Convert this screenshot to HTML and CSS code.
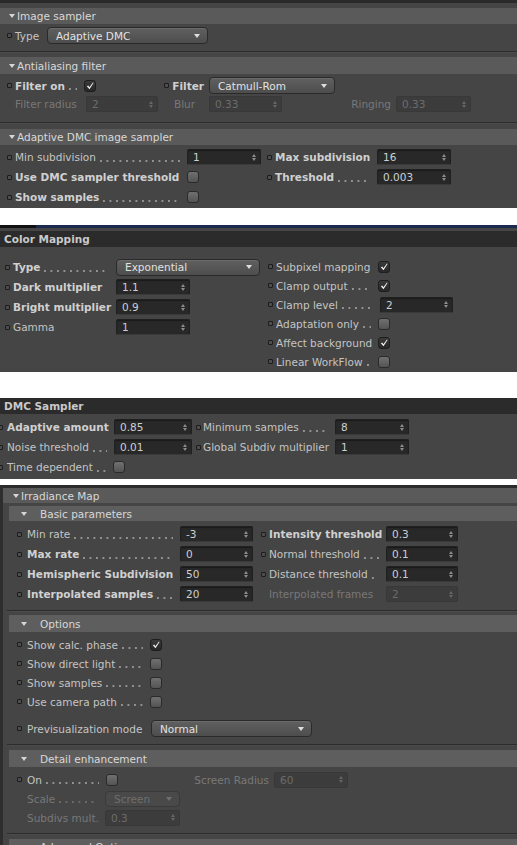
FILE: index.html
```html
<!DOCTYPE html>
<html>
<head>
<meta charset="utf-8">
<link rel="stylesheet" href="styles.css">
</head>
<body>

<section class="panel p1">
  <div class="hdr"><span class="tri"></span>Image sampler</div>
  <div class="row p1-type">
    <div class="cell w40"><span class="b"></span><span class="lbl">Type</span></div>
    <div class="dd w161"><span>Adaptive DMC</span></div>
  </div>
  <div class="sep p1-sep1"></div>
  <div class="hdr p1-h2"><span class="tri"></span>Antialiasing filter</div>
  <div class="row p1-filter">
    <div class="cell w77"><span class="b"></span><span class="lbl bold">Filter on</span><span class="dots"></span></div>
    <div class="ctl w12"><span class="chk on"><svg viewBox="0 0 12 12" width="10" height="10"><path d="M2.2 6.4 L3.9 5.4 L5.2 7.4 L9.6 1.8 L10.2 2.4 L5.4 10 Z" fill="#f2f2f2"/></svg></span></div>
    <div class="cell w113 end"><span class="b"></span><span class="lbl bold">Filter</span></div>
    <div class="dd w126"><span>Catmull-Rom</span></div>
  </div>
  <div class="row p1-radius">
    <div class="cell w79"><span class="b hid"></span><span class="lbl dis">Filter radius</span></div>
    <div class="fld off w72"><span class="v">2</span><span class="spin"><i></i><i></i></span></div>
    <div class="cell w51 pl16"><span class="lbl dis">Blur</span></div>
    <div class="fld off w73"><span class="v">0.33</span><span class="spin"><i></i><i></i></span></div>
    <div class="cell w114 end"><span class="lbl dis">Ringing</span></div>
    <div class="fld off w75"><span class="v">0.33</span><span class="spin"><i></i><i></i></span></div>
  </div>
  <div class="sep p1-sep2"></div>
  <div class="hdr p1-h3"><span class="tri"></span>Adaptive DMC image sampler</div>
  <div class="row p1-dmc">
    <div class="cell w180"><span class="b"></span><span class="lbl">Min subdivision</span><span class="dots"></span></div>
    <div class="fld w74"><span class="v">1</span><span class="spin"><i></i><i></i></span></div>
    <div class="cell w116 pl6"><span class="b"></span><span class="lbl bold">Max subdivision</span></div>
    <div class="fld w74"><span class="v">16</span><span class="spin"><i></i><i></i></span></div>
  </div>
  <div class="row">
    <div class="cell w180"><span class="b"></span><span class="lbl bold">Use DMC sampler threshold</span><span class="dots"></span></div>
    <div class="ctl w74"><span class="chk"></span></div>
    <div class="cell w116 pl6"><span class="b"></span><span class="lbl bold">Threshold</span><span class="dots"></span></div>
    <div class="fld w74"><span class="v">0.003</span><span class="spin"><i></i><i></i></span></div>
  </div>
  <div class="row">
    <div class="cell w180"><span class="b"></span><span class="lbl bold">Show samples</span><span class="dots"></span></div>
    <div class="ctl w74"><span class="chk"></span></div>
  </div>
</section>

<section class="panel p2">
  <div class="bluebar"><span class="stub"></span></div>
  <div class="hdr dark p2-hdr">Color Mapping</div>
  <div class="cols">
    <div class="col p2-left">
      <div class="row">
        <div class="cell w111"><span class="b"></span><span class="lbl bold">Type</span><span class="dots"></span></div>
        <div class="dd w144"><span>Exponential</span></div>
      </div>
      <div class="row">
        <div class="cell w111"><span class="b"></span><span class="lbl bold">Dark multiplier</span></div>
        <div class="fld w74"><span class="v">1.1</span><span class="spin"><i></i><i></i></span></div>
      </div>
      <div class="row">
        <div class="cell w111"><span class="b"></span><span class="lbl bold">Bright multiplier</span></div>
        <div class="fld w74"><span class="v">0.9</span><span class="spin"><i></i><i></i></span></div>
      </div>
      <div class="row">
        <div class="cell w111"><span class="b"></span><span class="lbl">Gamma</span></div>
        <div class="fld w74"><span class="v">1</span><span class="spin"><i></i><i></i></span></div>
      </div>
    </div>
    <div class="col p2-right">
      <div class="row h19">
        <div class="cell w110"><span class="b"></span><span class="lbl">Subpixel mapping</span></div>
        <span class="chk on"><svg viewBox="0 0 12 12" width="10" height="10"><path d="M2.2 6.4 L3.9 5.4 L5.2 7.4 L9.6 1.8 L10.2 2.4 L5.4 10 Z" fill="#f2f2f2"/></svg></span>
      </div>
      <div class="row h19">
        <div class="cell w110"><span class="b"></span><span class="lbl">Clamp output</span><span class="dots"></span></div>
        <span class="chk on"><svg viewBox="0 0 12 12" width="10" height="10"><path d="M2.2 6.4 L3.9 5.4 L5.2 7.4 L9.6 1.8 L10.2 2.4 L5.4 10 Z" fill="#f2f2f2"/></svg></span>
      </div>
      <div class="row h19">
        <div class="cell w110"><span class="b"></span><span class="lbl">Clamp level</span><span class="dots"></span></div>
        <div class="fld w73 ml2"><span class="v">2</span><span class="spin"><i></i><i></i></span></div>
      </div>
      <div class="row h19">
        <div class="cell w110"><span class="b"></span><span class="lbl">Adaptation only</span><span class="dots"></span></div>
        <span class="chk"></span>
      </div>
      <div class="row h19">
        <div class="cell w110"><span class="b"></span><span class="lbl">Affect background</span></div>
        <span class="chk on"><svg viewBox="0 0 12 12" width="10" height="10"><path d="M2.2 6.4 L3.9 5.4 L5.2 7.4 L9.6 1.8 L10.2 2.4 L5.4 10 Z" fill="#f2f2f2"/></svg></span>
      </div>
      <div class="row h19">
        <div class="cell w110"><span class="b"></span><span class="lbl">Linear WorkFlow</span><span class="dots"></span></div>
        <span class="chk"></span>
      </div>
    </div>
  </div>
</section>

<section class="panel p3">
  <div class="hdr dark p3-hdr">DMC Sampler</div>
  <div class="row p3-r1">
    <div class="cell w114"><span class="b"></span><span class="lbl bold">Adaptive amount</span></div>
    <div class="fld w78"><span class="v">0.85</span><span class="spin"><i></i><i></i></span></div>
    <div class="cell w143 pl4"><span class="b"></span><span class="lbl">Minimum samples</span><span class="dots"></span></div>
    <div class="fld w74"><span class="v">8</span><span class="spin"><i></i><i></i></span></div>
  </div>
  <div class="row">
    <div class="cell w114"><span class="b"></span><span class="lbl">Noise threshold</span><span class="dots"></span></div>
    <div class="fld w78"><span class="v">0.01</span><span class="spin"><i></i><i></i></span></div>
    <div class="cell w143 pl4"><span class="b"></span><span class="lbl">Global Subdiv multiplier</span></div>
    <div class="fld w74"><span class="v">1</span><span class="spin"><i></i><i></i></span></div>
  </div>
  <div class="row">
    <div class="cell w113"><span class="b"></span><span class="lbl">Time dependent</span><span class="dots"></span></div>
    <span class="chk"></span>
  </div>
</section>

<section class="panel p4">
  <div class="hdr p4-hdr"><span class="tri"></span>Irradiance Map</div>
  <div class="sub p4-basic"><span class="tri"></span>Basic parameters</div>
  <div class="row p4-first">
    <div class="cell w163"><span class="b"></span><span class="lbl">Min rate</span><span class="dots"></span></div>
    <div class="fld w73"><span class="v">-3</span><span class="spin"><i></i><i></i></span></div>
    <div class="cell w133 pl8"><span class="b"></span><span class="lbl bold">Intensity threshold</span></div>
    <div class="fld w72"><span class="v">0.3</span><span class="spin"><i></i><i></i></span></div>
  </div>
  <div class="row">
    <div class="cell w163"><span class="b"></span><span class="lbl bold">Max rate</span><span class="dots"></span></div>
    <div class="fld w73"><span class="v">0</span><span class="spin"><i></i><i></i></span></div>
    <div class="cell w133 pl8"><span class="b"></span><span class="lbl">Normal threshold</span><span class="dots"></span></div>
    <div class="fld w72"><span class="v">0.1</span><span class="spin"><i></i><i></i></span></div>
  </div>
  <div class="row">
    <div class="cell w163"><span class="b"></span><span class="lbl bold">Hemispheric Subdivision</span></div>
    <div class="fld w73"><span class="v">50</span><span class="spin"><i></i><i></i></span></div>
    <div class="cell w133 pl8"><span class="b"></span><span class="lbl">Distance threshold</span><span class="dots"></span></div>
    <div class="fld w72"><span class="v">0.1</span><span class="spin"><i></i><i></i></span></div>
  </div>
  <div class="row">
    <div class="cell w163"><span class="b"></span><span class="lbl bold">Interpolated samples</span><span class="dots"></span></div>
    <div class="fld w73"><span class="v">20</span><span class="spin"><i></i><i></i></span></div>
    <div class="cell w133 pl8"><span class="b hid"></span><span class="lbl dis">Interpolated frames</span></div>
    <div class="fld off w72"><span class="v">2</span><span class="spin"><i></i><i></i></span></div>
  </div>

  <div class="sep p4-sep"></div>
  <div class="sub p4-opt"><span class="tri"></span>Options</div>
  <div class="row h19 p4-ofirst">
    <div class="cell w133"><span class="b"></span><span class="lbl">Show calc. phase</span><span class="dots"></span></div>
    <span class="chk on"><svg viewBox="0 0 12 12" width="10" height="10"><path d="M2.2 6.4 L3.9 5.4 L5.2 7.4 L9.6 1.8 L10.2 2.4 L5.4 10 Z" fill="#f2f2f2"/></svg></span>
  </div>
  <div class="row h19">
    <div class="cell w133"><span class="b"></span><span class="lbl">Show direct light</span><span class="dots"></span></div>
    <span class="chk"></span>
  </div>
  <div class="row h19">
    <div class="cell w133"><span class="b"></span><span class="lbl">Show samples</span><span class="dots"></span></div>
    <span class="chk"></span>
  </div>
  <div class="row h19">
    <div class="cell w133"><span class="b"></span><span class="lbl">Use camera path</span><span class="dots"></span></div>
    <span class="chk"></span>
  </div>
  <div class="row p4-previs">
    <div class="cell w134"><span class="b"></span><span class="lbl">Previsualization mode</span></div>
    <div class="dd w161"><span>Normal</span></div>
  </div>

  <div class="sep p4-sep2"></div>
  <div class="sub p4-det"><span class="tri"></span>Detail enhancement</div>
  <div class="row h19 p4-dfirst">
    <div class="cell w89"><span class="b"></span><span class="lbl">On</span><span class="dots"></span></div>
    <span class="chk"></span>
    <div class="cell w156 end"><span class="lbl dis">Screen Radius</span></div>
    <div class="fld off w74"><span class="v">60</span><span class="spin"><i></i><i></i></span></div>
  </div>
  <div class="row h19">
    <div class="cell w88"><span class="b hid"></span><span class="lbl dis">Scale</span><span class="dots ddis"></span></div>
    <div class="dd off w75"><span>Screen</span></div>
  </div>
  <div class="row h19">
    <div class="cell w88"><span class="b hid"></span><span class="lbl dis">Subdivs mult.</span></div>
    <div class="fld off w75"><span class="v">0.3</span><span class="spin"><i></i><i></i></span></div>
  </div>

  <div class="sep p4-sep3"></div>
  <div class="sub p4-adv"><span class="tri"></span>Advanced Options</div>
</section>

</body>
</html>
```

FILE: styles.css
```css
* { box-sizing: border-box; margin: 0; padding: 0; }
html, body { width: 517px; height: 845px; overflow: hidden; background: #ffffff; }
body {
  font-family: "DejaVu Sans", Verdana, sans-serif;
  font-size: 10.5px;
  color: #c4c4c4;
}

.panel { background: #454545; }

/* headers */
.hdr {
  display: flex; align-items: center;
  height: 16px; padding-left: 9px;
  background: #5a5a5a; color: #d8d8d8;
  white-space: nowrap;
}
.hdr.dark { background: #2b2b2b; color: #c9c9c9; font-weight: bold; padding-left: 4px; }
.sub {
  display: flex; align-items: center;
  height: 16px; margin-left: 6px; padding-left: 12px;
  background: #5e5e5e; color: #d8d8d8;
  white-space: nowrap;
}
.tri {
  width: 0; height: 0; flex: none;
  border-left: 3px solid transparent; border-right: 3px solid transparent;
  border-top: 4px solid #d6d6d6;
  margin-right: 2px;
}
.sub .tri { margin-right: 13px; }

.sep { height: 2px; background: #2c2c2c; border-bottom: 1px solid #4c4c4c; }

/* rows */
.row { display: flex; align-items: center; height: 20px; }
.row.h19 { height: 19px; }
.cell { display: flex; align-items: center; flex: none; height: 100%; overflow: hidden; }
.cell.end { justify-content: flex-end; padding-right: 5px; }
.ctl { display: flex; align-items: center; flex: none; }
.pl4 { padding-left: 4px; }
.pl6 { padding-left: 6px; }
.pl8 { padding-left: 8px; }
.pl16 { padding-left: 16px; }
.ml2 { margin-left: 2px; }

.b {
  width: 5px; height: 5px; flex: none;
  border: 1px solid #1c1c1c; border-radius: 1px;
  background: #4d4d4d;
  margin-right: 3px;
}
.b.hid { visibility: hidden; }
.lbl { white-space: nowrap; flex: none; }
.bold { font-weight: bold; color: #d0d0d0; }
.dis { color: #787878; }

.dots {
  flex: 1 1 0; min-width: 0;
  height: 2px; margin: 7px 7px 0 4px;
  background-image: radial-gradient(circle at 1px 1px, #939393 0.8px, transparent 1.15px);
  background-size: 6.5px 2px;
  background-repeat: repeat-x;
}
.dots.ddis { background-image: radial-gradient(circle at 1px 1px, #6a6a6a 0.8px, transparent 1.15px); }

/* numeric field */
.fld {
  display: flex; align-items: center; flex: none;
  height: 16px; padding-left: 5px;
  background: #282828;
  border: 1px solid #202020; border-bottom-color: #3a3a3a;
  border-radius: 2px;
  box-shadow: inset 0 1px 1px #1a1a1a;
  color: #ccd0d4;
}
.fld .v { flex: 1; white-space: nowrap; }
.fld.off { background: #3c3c3c; border-color: #383838; box-shadow: none; color: #6c6c6c; }
.spin { display: flex; flex-direction: column; gap: 1px; margin-right: 4px; }
.spin i {
  display: block; width: 0; height: 0;
  border-left: 2.5px solid transparent; border-right: 2.5px solid transparent;
}
.spin i:first-child { border-bottom: 3px solid #8c8c8c; }
.spin i:last-child { border-top: 3px solid #8c8c8c; }
.fld.off .spin i:first-child { border-bottom-color: #666; }
.fld.off .spin i:last-child { border-top-color: #666; }

/* dropdown */
.dd {
  display: flex; align-items: center; justify-content: space-between; flex: none;
  height: 17px; padding: 0 7px 0 8px;
  border: 1px solid #2a2a2a; border-radius: 4px;
  background: linear-gradient(#606060, #4d4d4d);
  box-shadow: inset 0 1px 0 #6b6b6b;
  color: #e2e2e2; white-space: nowrap;
}
.dd::after {
  content: ""; width: 0; height: 0;
  border-left: 3.5px solid transparent; border-right: 3.5px solid transparent;
  border-top: 4px solid #dedede;
}
.dd.off { background: #494949; border-color: #3a3a3a; box-shadow: none; color: #6e6e6e; height: 16px; }
.dd.off::after { border-top-color: #6e6e6e; }

/* checkbox */
.chk {
  display: flex; align-items: center; justify-content: center; flex: none;
  width: 12px; height: 12px;
  border: 1px solid #2a2a2a; border-radius: 3px;
  background: linear-gradient(#707070, #545454);
}
.chk.on { background: linear-gradient(#3a3a3a, #282828); border-color: #1e1e1e; }

/* widths */
.w12 { width: 12px; } .w40 { width: 40px; } .w51 { width: 51px; }
.w72 { width: 72px; } .w73 { width: 73px; } .w74 { width: 74px; }
.w75 { width: 75px; } .w77 { width: 77px; } .w78 { width: 78px; }
.w79 { width: 79px; } .w88 { width: 88px; } .w89 { width: 89px; }
.w110 { width: 110px; } .w111 { width: 111px; } .w113 { width: 113px; }
.w114 { width: 114px; } .w116 { width: 116px; } .w126 { width: 126px; }
.w133 { width: 133px; } .w134 { width: 134px; } .w143 { width: 143px; }
.w144 { width: 144px; } .w156 { width: 156px; } .w161 { width: 161px; }
.w163 { width: 163px; } .w180 { width: 180px; }

/* panel 1 */
.p1 { height: 208px; border-top: 3px solid #2a2a2a; padding-top: 5px; }
.p1 .row { padding-left: 7px; }
.p1-type { height: 17px !important; margin-top: 3px; }
.p1-sep1 { margin-top: 7px; }
.p1-h2 { margin-top: 4px; height: 17px; }
.p1-filter { height: 17px !important; margin-top: 3px; }
.p1-radius { height: 16px !important; margin-top: 2px; }
.p1-sep2 { margin-top: 10px; }
.p1-h3 { margin-top: 5px; }
.p1-dmc { margin-top: 2px; }

/* panel 2 */
.p2 { height: 147px; margin-top: 17px; }
.bluebar { display: flex; height: 3px; background: #1b2a4e; }
.stub { width: 36px; height: 3px; background: #111; }
.p2-hdr { margin-top: 3px; }
.cols { display: flex; margin-top: 10px; }
.col { display: flex; flex-direction: column; flex: none; }
.p2-left { width: 261px; padding-left: 5px; }
.p2-right { padding-left: 7px; }

/* panel 3 */
.p3 { height: 81px; margin-top: 26px; }
.p3-hdr { padding-left: 0; }
.p3 .row .cell:first-child .b { margin-left: -2px; margin-right: 4px; }
.p3 .row .cell.pl4 .b { margin-right: 2px; }
.p3-r1 { margin-top: 3px; }

/* panel 4 */
.p4 { margin-top: 6px; height: 400px; border-top: 3px solid #2b2b2b; border-left: 3px solid #2e2e2e; }
.p4 .row { padding-left: 14px; }
.p4 .row .cell:first-child .b { margin-right: 5px; }
.p4-hdr { height: 15px; padding-left: 10px; }
.p4-basic { margin-top: 3px; height: 15px; }
.p4-first { margin-top: 3px; }
.p4-sep { margin-top: 6px; margin-left: 4px; }
.p4-opt { margin-top: 3px; height: 17px; }
.p4-ofirst { margin-top: 3px; }
.p4-previs { height: 17px !important; margin-top: 9px; }
.p4-sep2 { margin-top: 7px; margin-left: 4px; }
.p4-det { margin-top: 4px; height: 17px; }
.p4-dfirst { margin-top: 3px; }
.p4-sep3 { margin-top: 6px; margin-left: 4px; }
.p4-adv { margin-top: 4px; }
```
